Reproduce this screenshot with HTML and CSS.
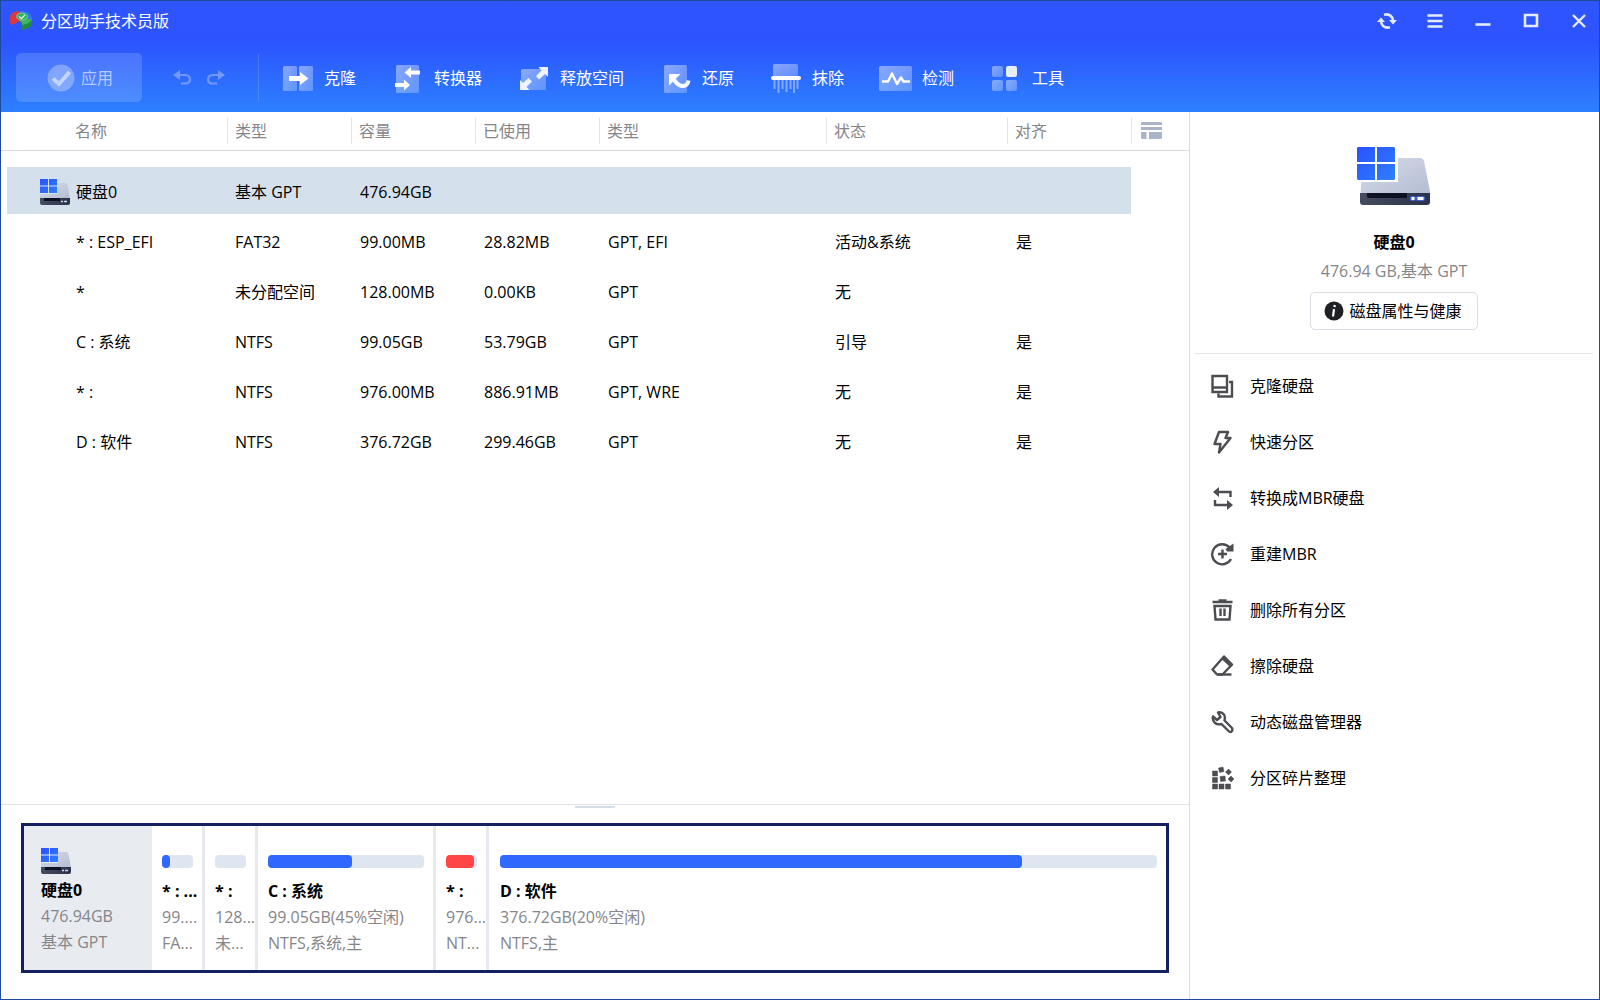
FILE: index.html
```html
<!DOCTYPE html>
<html lang="zh-CN">
<head>
<meta charset="utf-8">
<title>分区助手技术员版</title>
<link rel="stylesheet" href="styles.css">
</head>
<body>
<svg class="defs" width="0" height="0" aria-hidden="true">
  <defs>
    <linearGradient id="win" x1="0" y1="0" x2="1" y2="1"><stop offset="0" stop-color="#2b50ff"/><stop offset="1" stop-color="#2e80ff"/></linearGradient>
    <linearGradient id="lid" x1="0" y1="0" x2="1" y2="1"><stop offset="0" stop-color="#d6dce9"/><stop offset="1" stop-color="#b4bcd2"/></linearGradient>
    <linearGradient id="base" x1="0" y1="0" x2="1" y2="0"><stop offset="0" stop-color="#454c60"/><stop offset="1" stop-color="#2c3349"/></linearGradient>
    <linearGradient id="pane" x1="0" y1="0" x2="1" y2="1"><stop offset="0" stop-color="#fff" stop-opacity=".44"/><stop offset="1" stop-color="#fff" stop-opacity=".24"/></linearGradient>
  </defs>
  <symbol id="disk" viewBox="0 0 74 58">
    <path d="M5 35H41V11H63Q66 11 67 14L73.500 47H3.500L4 37Q4 35 5 35Z" fill="url(#lid)"/>
    <path d="M3 46H73V55Q73 58 70 58H6Q3 58 3 55Z" fill="url(#base)"/>
    <path d="M10 46H50V51H12Q10 51 10 49Z" fill="#0c1222"/>
    <rect x="53" y="49" width="6" height="5" rx="2" fill="#3c62d8"/><rect x="59" y="49" width="9" height="5" rx="2" fill="#3c62d8"/>
    <rect x="54.500" y="50" width="3" height="3" fill="#fff"/><rect x="60.500" y="50" width="6" height="3" fill="#fff"/>
    <path d="M1 0H18V15H0V1ZM20 0H37L38 1V15H20ZM0 17H18V33H1L0 32ZM20 17H38V32L37 33H20Z" fill="url(#win)"/>
  </symbol>
  <symbol id="disk-sm" viewBox="0 0 30 26">
    <path d="M0 15H17V4H25Q27 4 27.500 6L30 20H0Z" fill="url(#lid)"/>
    <path d="M0 19H30V24Q30 26 28 26H2Q0 26 0 24Z" fill="url(#base)"/>
    <rect x="4" y="19" width="16" height="3" fill="#0c1222"/>
    <path d="M21 22.500H23M24 22.500H27" stroke="#c9d6ff" stroke-width="1.500"/>
    <path d="M0 0H8V6.500H0ZM9 0H17V6.500H9ZM0 7.500H8V14H0ZM9 7.500H17V14H9Z" fill="url(#win)"/>
  </symbol>
</svg>
<div class="window">
  <header class="header">
    <div class="titlebar">
      <svg class="logo" viewBox="0 0 24 22"><path d="M1 13V7Q2 1 11 1L9 6L12 10L9 12L3 15Z" fill="#d93a3f"/><path d="M11 1Q22 1 23 8V12L15 10L12 6Z" fill="#2c7fe0"/><path d="M23 11V15Q20 19 13 20V14L11 11L16 9Z" fill="#1f8a43"/><path d="M13 15Q20 14 23 10L16 8L10 10L13 13Z" fill="#43b45c"/><ellipse cx="13" cy="6.500" rx="5.500" ry="3.500" fill="#32ad62" stroke="#9adfc0" stroke-width=".7"/><path d="M10 6.500L12.500 8.500L16 5" fill="none" stroke="#d9ffe0" stroke-width="1.300"/></svg>
      <h1 class="title">分区助手技术员版</h1>
      <div class="controls">
        <button class="control" aria-label="刷新"><svg viewBox="0 0 20 16"><path d="M7 1.800Q14 0 16 7M13 14.200Q6 16 4 9" fill="none" stroke="currentColor" stroke-width="2.600"/><path d="M12 7H20L16 11.500ZM0 9L4 4.500L8 9Z" fill="currentColor"/></svg></button>
        <button class="control" aria-label="菜单"><svg viewBox="0 0 20 16"><path d="M2.500 2.500H17.500M2.500 8H17.500M2.500 13.500H17.500" fill="none" stroke="currentColor" stroke-width="2.400"/></svg></button>
        <button class="control" aria-label="最小化"><svg viewBox="0 0 20 16"><path d="M2.500 11.500H17.500" fill="none" stroke="currentColor" stroke-width="2.600"/></svg></button>
        <button class="control" aria-label="最大化"><svg viewBox="0 0 20 16"><path d="M4 2H16V13H4Z" fill="none" stroke="currentColor" stroke-width="2.600"/></svg></button>
        <button class="control" aria-label="关闭"><svg viewBox="0 0 20 16"><path d="M4 2L16 14M16 2L4 14" fill="none" stroke="currentColor" stroke-width="2.400"/></svg></button>
      </div>
    </div>
    <nav class="toolbar">
      <button class="apply"><svg viewBox="0 0 28 28"><circle cx="14" cy="14" r="13.500" fill="#fff" fill-opacity=".3"/><path d="M6 14.500L12 20L22.500 8" fill="none" stroke="#c4d5ff" stroke-width="4"/></svg>应用</button>
      <div class="history">
        <button class="step" aria-label="撤销"><svg viewBox="0 0 18 15"><path d="M5 5H12Q17 5.500 17 9.500Q17 13.500 12 13.500H8" fill="none" stroke="currentColor" stroke-width="2.200"/><path d="M0 5L7 0V10Z" fill="currentColor"/></svg></button>
        <button class="step" aria-label="重做"><svg viewBox="0 0 18 15"><path d="M13 5H6Q1 5.500 1 9.500Q1 13.500 6 13.500H10" fill="none" stroke="currentColor" stroke-width="2.200"/><path d="M18 5L11 0V10Z" fill="currentColor"/></svg></button>
      </div>
      <div class="tools">
        <button class="tool"><svg viewBox="0 0 34 32"><rect x="0" y="4" width="14" height="25" rx="1.500" fill="url(#pane)"/><rect x="16" y="4" width="14" height="25" rx="1.500" fill="url(#pane)"/><path d="M6 14H17V10L25.500 16.500L17 23V19H6Z" fill="#fff"/></svg>克隆</button>
        <button class="tool"><svg viewBox="0 0 34 32"><rect x="3" y="3" width="23" height="28" rx="1.500" fill="url(#pane)"/><path d="M27 8.500H18V5L11.500 10.500L18 16V12.500H27ZM2 21H11V17.500L17 23L11 28.500V25H2Z" fill="#fff"/></svg>转换器</button>
        <button class="tool"><svg viewBox="0 0 34 32"><rect x="2" y="7" width="25" height="21" rx="1.500" fill="url(#pane)"/><path d="M29 5V15L26 12L20 17.500L17 14L22.500 8.500L19.500 5ZM1 28V18L4 21L9.500 16L13 19.500L7.500 25L10.500 28Z" fill="#eef4ff"/></svg>释放空间</button>
        <button class="tool"><svg viewBox="0 0 34 32"><rect x="3" y="3" width="23" height="28" rx="1.500" fill="url(#pane)"/><path d="M8 12H19.500L8 23.500Z" fill="#fff"/><path d="M12 16Q17 24.500 22 24Q26.500 24 27.500 18.500" stroke="#fff" stroke-width="4" fill="none"/></svg>还原</button>
        <button class="tool"><svg viewBox="0 0 34 32"><rect x="2" y="2" width="25" height="12" rx="1.500" fill="url(#pane)"/><rect x="0" y="14" width="30" height="4" rx="2" fill="#fff"/><path d="M3.500 18V27M7.500 18V31M11.500 18V27M15.500 18V30M19.500 18V27M23 18V31M26.500 18V27" stroke="#bed2ff" stroke-opacity=".6" stroke-width="2" fill="none"/></svg>抹除</button>
        <button class="tool"><svg viewBox="-2 0 34 32"><rect x="-4" y="4" width="33" height="25" rx="1.500" fill="url(#pane)"/><path d="M0 19.500H5L9 11.500L14 22L18 15.500L20.500 19.500H26" fill="none" stroke="#fff" stroke-width="2.400" stroke-linejoin="round" stroke-linecap="round"/></svg>检测</button>
        <button class="tool"><svg viewBox="0 0 34 32"><rect x="1" y="4" width="11" height="11" rx="2" fill="url(#pane)"/><rect x="15" y="4" width="11" height="11" rx="2" fill="#e6eeff"/><rect x="1" y="18" width="11" height="11" rx="2" fill="url(#pane)"/><rect x="15" y="18" width="11" height="11" rx="2" fill="url(#pane)"/></svg>工具</button>
      </div>
    </nav>
  </header>
  <div class="body">
    <main class="main">
      <div class="list">
        <table class="table">
          <colgroup><col class="col-name"><col class="col"><col class="col"><col class="col"><col class="col-kind"><col class="col-state"><col class="col"><col></colgroup>
          <thead><tr><th>名称</th><th>类型</th><th>容量</th><th>已使用</th><th>类型</th><th>状态</th><th>对齐</th><th><button class="columns" aria-label="列设置"><svg viewBox="0 0 22 18"><path d="M1 0H20L21 1V3H0V1ZM0 5H21V8H0ZM0 10H5.500V17H1L0 16ZM8 10H21V16L20 17H8Z" fill="#a9b4c8"/></svg></button></th></tr></thead>
          <tbody>
            <tr class="selected"><td><span class="disk-name"><svg class="disk-small"><use href="#disk-sm"/></svg>硬盘0</span></td><td>基本 GPT</td><td>476.94GB</td><td></td><td></td><td></td><td></td><td></td></tr>
            <tr><td>* : ESP_EFI</td><td>FAT32</td><td>99.00MB</td><td>28.82MB</td><td>GPT, EFI</td><td>活动&amp;系统</td><td>是</td><td></td></tr>
            <tr><td>*</td><td>未分配空间</td><td>128.00MB</td><td>0.00KB</td><td>GPT</td><td>无</td><td></td><td></td></tr>
            <tr><td>C : 系统</td><td>NTFS</td><td>99.05GB</td><td>53.79GB</td><td>GPT</td><td>引导</td><td>是</td><td></td></tr>
            <tr><td>* :</td><td>NTFS</td><td>976.00MB</td><td>886.91MB</td><td>GPT, WRE</td><td>无</td><td>是</td><td></td></tr>
            <tr><td>D : 软件</td><td>NTFS</td><td>376.72GB</td><td>299.46GB</td><td>GPT</td><td>无</td><td>是</td><td></td></tr>
          </tbody>
        </table>
      </div>
      <section class="map">
        <div class="handle"></div>
        <div class="disk-map">
          <div class="disk-cell"><svg class="disk-small"><use href="#disk-sm"/></svg><b>硬盘0</b><span>476.94GB</span><span>基本 GPT</span></div>
          <div class="part tiny"><div class="bar"><div class="fill" style="width:26%"></div></div><b>* : ...</b><span>99....</span><span>FA...</span></div>
          <div class="part tiny"><div class="bar"></div><b>* :</b><span>128...</span><span>未...</span></div>
          <div class="part small"><div class="bar"><div class="fill" style="width:54%"></div></div><b>C : 系统</b><span>99.05GB(45%空闲)</span><span>NTFS,系统,主</span></div>
          <div class="part tiny"><div class="bar"><div class="fill full" style="width:90%"></div></div><b>* :</b><span>976...</span><span>NT...</span></div>
          <div class="part large"><div class="bar"><div class="fill" style="width:79.4%"></div></div><b>D : 软件</b><span>376.72GB(20%空闲)</span><span>NTFS,主</span></div>
        </div>
      </section>
    </main>
    <aside class="side">
      <div class="summary">
        <svg class="disk-large"><use href="#disk"/></svg>
        <h2 class="summary-name">硬盘0</h2>
        <p class="summary-size">476.94 GB,基本 GPT</p>
        <button class="health"><svg viewBox="0 0 20 20"><circle cx="10" cy="10" r="9.500" fill="#1f2024"/><path d="M10.800 4L10.500 6.200M10 8.200L9 15.500" stroke="#fff" stroke-width="2.200" fill="none"/></svg>磁盘属性与健康</button>
      </div>
      <ul class="actions">
        <li><button class="action"><svg viewBox="0 0 24 24"><path d="M2.500 2H17V18H2.500ZM2.500 13.500H17M19 8H22V22.500H8.500V19.500" fill="none" stroke="currentColor" stroke-width="2.400"/></svg>克隆硬盘</button></li>
        <li><button class="action"><svg viewBox="0 0 24 24"><path d="M9 2H18L15.500 8H20.500L9 22.500L10.500 14H4.500Z" fill="none" stroke="currentColor" stroke-width="2.400" stroke-linejoin="round"/></svg>快速分区</button></li>
        <li><button class="action"><svg viewBox="0 0 24 24"><path d="M6 6H20.500V11M5 14V19H17" fill="none" stroke="currentColor" stroke-width="2.400"/><path d="M3 6L9 1V11ZM23 19L17 14V24Z" fill="currentColor"/></svg>转换成MBR硬盘</button></li>
        <li><button class="action"><svg viewBox="0 0 24 24"><path d="M19.500 5.500A10 10 0 1 0 21 17M12.500 7.500V16.500M8 12H17" fill="none" stroke="currentColor" stroke-width="2.400"/><path d="M23.500 1.500V9.500H17L15.500 7Z" fill="currentColor"/></svg>重建MBR</button></li>
        <li><button class="action"><svg viewBox="0 0 24 24"><path d="M2.500 4H22.500M8.500 2.500H16.500M4.500 8H20.500L19.500 21.500H5.500ZM10.500 10.500V18M14.500 10.500V18" fill="none" stroke="currentColor" stroke-width="2.400"/></svg>删除所有分区</button></li>
        <li><button class="action"><svg viewBox="0 0 24 24"><path d="M14 2.500L22 10.500L12.500 20.500H7L2.500 15.500Z" fill="none" stroke="currentColor" stroke-width="2.400" stroke-linejoin="round"/><path d="M14 2L23 11L20.500 13.500L11.500 5Z" fill="currentColor"/><path d="M8 20.500H21.500" stroke="currentColor" stroke-width="2.400"/></svg>擦除硬盘</button></li>
        <li><button class="action"><svg viewBox="0 0 24 24"><path d="M8 2.500Q11.500 1.500 14 4.500Q15.500 7 14.500 10.500L22 18Q23 20.500 21.500 21.500Q20 22.500 18.500 21L11.500 14Q7.500 15 5 13Q2 10 3 6.500L7 10L10.500 7Z" fill="none" stroke="currentColor" stroke-width="2.400" stroke-linejoin="round"/></svg>动态磁盘管理器</button></li>
        <li><button class="action"><svg viewBox="0 0 24 24"><path d="M2.500 5H7.500V10H2.500ZM2.500 11.500H7.500V16.500H2.500ZM2.500 18H7.500V23H2.500ZM9 18H14V23H9ZM15.500 18H20.500V23H15.500ZM10 10.500L15 10L15.500 15L10.500 15.500ZM8.500 2L13 1L14 5.500L9.500 6.500ZM18.500 3L21.500 6L18.500 9L15.500 6ZM21 10L24 13L21 16L18 13Z" fill="currentColor" stroke="currentColor" stroke-width=".5" stroke-linejoin="round"/></svg>分区碎片整理</button></li>
      </ul>
    </aside>
  </div>
</div>
</body>
</html>
```
FILE: styles.css
```css
* { box-sizing: border-box; }

body {
  margin: 0;
  background: #fff;
  color: #000;
  font: 16px/26px "Open Sans", "Noto Sans CJK SC", sans-serif;
}

button {
  padding: 0;
  border: 0;
  background: none;
  color: inherit;
  font: inherit;
}

svg { flex: none; }

.defs { position: absolute; }

.window {
  display: flex;
  flex-direction: column;
  min-height: 100vh;
  border: 1px solid #1d4a9c;
}

.header {
  height: 111px;
  background: linear-gradient(#2f55ff 0, #2c53ff 35%, #2d80ff 100%);
  color: #fff;
}

.titlebar {
  display: flex;
  align-items: center;
  height: 40px;
  padding-left: 8px;
}

.logo { width: 24px; height: 22px; }

.title {
  margin: 0 0 0 8px;
  font-size: 16px;
  font-weight: 400;
}

.controls {
  display: flex;
  margin-right: -4px;
  margin-left: auto;
}

.control {
  display: flex;
  align-items: center;
  justify-content: center;
  width: 48px;
  height: 40px;
  color: #e4ebff;
}

.control svg { width: 20px; height: 16px; }

.toolbar {
  display: flex;
  align-items: center;
  padding: 12px 15px 0;
}

.apply {
  display: flex;
  align-items: center;
  justify-content: center;
  gap: 6px;
  width: 126px;
  height: 49px;
  padding-left: 2px;
  border-radius: 5px;
  background: rgba(255, 255, 255, .15);
  color: #b5caff;
}

.apply svg { width: 28px; height: 28px; }

.history {
  display: flex;
  align-items: center;
  gap: 16px;
  height: 47px;
  padding: 0 33px 0 31px;
  border-right: 1px solid rgba(255, 255, 255, .14);
}

.step {
  display: flex;
  color: #7398ff;
}

.step svg { width: 18px; height: 15px; }

.tools {
  display: flex;
  gap: 37px;
  margin-left: 24px;
}

.tool {
  display: flex;
  align-items: center;
  gap: 7px;
}

.tool svg { width: 34px; height: 32px; overflow: visible; }

.body {
  display: flex;
  flex: 1;
}

.main {
  display: flex;
  flex: 1;
  flex-direction: column;
  min-width: 0;
}

.list { flex: 1; }

.table {
  width: 100%;
  border-spacing: 0;
  table-layout: fixed;
}

.col-name { width: 226px; }
.col { width: 124px; }
.col-kind { width: 227px; }
.col-state { width: 181px; }

.table th {
  height: 39px;
  padding: 0 0 0 8px;
  border-bottom: 1px solid #dcdce6;
  background: linear-gradient(#e4e4ea, #e4e4ea) 0 6px / 1px 26px no-repeat;
  color: #85868a;
  font-weight: 400;
  text-align: left;
}

.table th:first-child {
  padding-left: 74px;
  background: none;
}

.table th:last-child { padding-left: 10px; }

.columns { display: flex; }
.columns svg { width: 22px; height: 18px; }

.table tbody::before {
  display: table-row;
  height: 16px;
  content: "";
}

.table td {
  height: 50px;
  padding: 3px 0 0 9px;
  border-bottom: 3px solid transparent;
  background-clip: padding-box;
  white-space: nowrap;
}

.table td:nth-child(2) { padding-left: 8px; }

.table td:first-child {
  padding-left: 69px;
  border-left: 6px solid transparent;
}

.selected td { background-color: #d5e0ed; }
.selected td:last-child { background: none; }
.table .selected td:first-child { padding-left: 33px; }

.disk-name {
  display: flex;
  align-items: center;
  gap: 6px;
}

.disk-small { width: 30px; height: 26px; }

.map {
  padding: 1px 20px 26px;
  border-top: 1px solid #e2e2e8;
}

.handle {
  width: 40px;
  height: 2px;
  margin: 0 auto 15px;
  background: #d5dcea;
}

.disk-map {
  display: flex;
  height: 150px;
  border: 3px solid #14205f;
}

.disk-cell,
.part {
  display: flex;
  flex-direction: column;
  min-width: 0;
  color: #85868a;
  white-space: nowrap;
}

.disk-cell {
  width: 128px;
  padding: 22px 17px 0;
  background: #e8ebf0;
}

.disk-cell .disk-small { margin-bottom: 3px; }

.disk-map b { color: #000; }

.part {
  padding: 29px 0 0 10px;
  border-right: 3px solid #e8e9ee;
}

.tiny { width: 53px; }
.small { width: 178px; }

.large {
  flex: 1;
  padding-left: 11px;
  border-right: 0;
}

.bar {
  flex: none;
  height: 13px;
  margin: 0 9px 10px 0;
  border-radius: 4px;
  background: #dfe5f1;
}

.fill {
  height: 13px;
  border-radius: 4px;
  background: #2f68ff;
}

.full { background: #ff4746; }

.side {
  width: 410px;
  padding: 0 6px 0 5px;
  border-left: 1px solid #dcdce6;
}

.summary {
  display: flex;
  flex-direction: column;
  align-items: center;
  height: 242px;
  padding-top: 35px;
  border-bottom: 1px solid #e2e2e8;
}

.disk-large { width: 74px; height: 58px; }

.summary-name {
  margin: 24px 0 0;
  font-size: 16px;
  line-height: 26px;
}

.summary-size {
  margin: 3px 0 8px;
  color: #85868a;
}

.health {
  display: flex;
  align-items: center;
  justify-content: center;
  gap: 5px;
  width: 168px;
  height: 38px;
  padding-right: 2px;
  border: 1px solid #dcdce4;
  border-radius: 5px;
}

.health svg { width: 20px; height: 20px; }

.actions {
  margin: 4px 0 0;
  padding: 0;
  list-style: none;
}

.action {
  display: flex;
  align-items: center;
  gap: 16px;
  width: 100%;
  height: 56px;
  padding-left: 15px;
}

.action svg { width: 24px; height: 24px; color: #4c4d50; }
```
